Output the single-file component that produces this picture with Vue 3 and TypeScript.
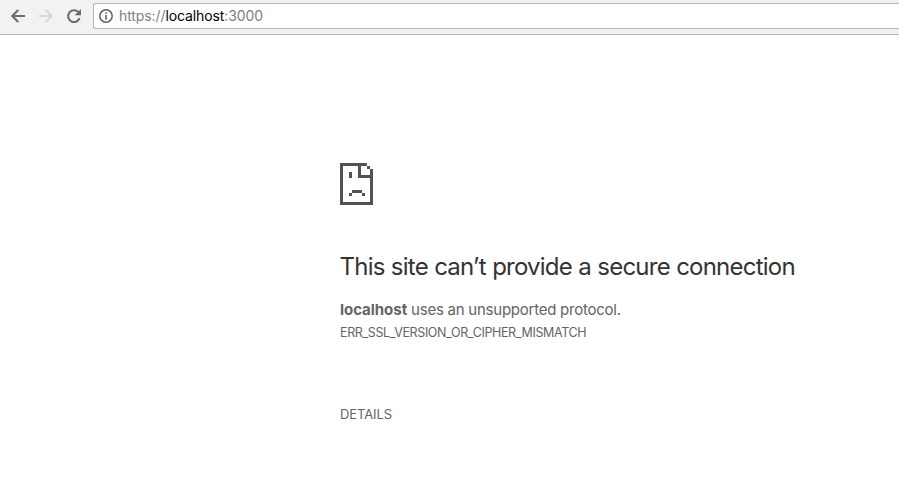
<script setup lang="ts">
const scheme = 'https://'
const host = 'localhost'
const port = ':3000'
const errorCode = 'ERR_SSL_VERSION_OR_CIPHER_MISMATCH'
</script>

<template>
  <div class="browser">
    <header class="toolbar">
      <nav class="nav">
        <svg class="icon" viewBox="0 0 16 16"><path d="M15 8H2.4M8.2 2.1 2.3 8l5.9 5.9" /></svg>
        <svg class="icon disabled" viewBox="0 0 16 16"><path d="M1 8h12.6M7.8 2.1 13.7 8l-5.9 5.9" /></svg>
        <svg class="icon" viewBox="0 0 16 16">
          <path d="M13.6 10.2A5.9 5.9 0 1 1 12.2 3.9L13.2 5" />
          <path class="solid" d="M15 1v6.3H8.7z" />
        </svg>
      </nav>
      <div class="address">
        <svg class="info" viewBox="0 0 14 14">
          <circle cx="7" cy="7" r="6.2" />
          <path d="M6.2 3.2h1.6v1.6H6.2zM6.2 6h1.6v4.8H6.2z" />
        </svg>
        <span class="url">{{ scheme }}<b>{{ host }}</b>{{ port }}</span>
      </div>
    </header>
    <main class="page">
      <svg class="sad" viewBox="0 0 33 42" shape-rendering="crispEdges">
        <path d="M0 0h27v3H21v9h9V6h3v36H0zM3 3v36h27V15H18V3zM27 3h3v3h-3zM9 9h3v6H9zM12 27h10v3H12zM9 30h3v3H9zM22 30h3v3h-3z" fill-rule="evenodd" />
      </svg>
      <h1>This site can’t provide a secure connection</h1>
      <p class="message"><strong>{{ host }}</strong> uses an unsupported protocol.</p>
      <p class="code">{{ errorCode }}</p>
      <button class="details" type="button">DETAILS</button>
    </main>
  </div>
</template>

<style>
body {
  background: #fff;
}
</style>

<style scoped>
.browser {
  height: 485px;
  overflow: hidden;
  font-family: Inter, "Liberation Sans", sans-serif;
}
.toolbar {
  display: flex;
  box-sizing: border-box;
  height: 35px;
  padding-top: 3px;
  background: #f2f2f2;
  border-bottom: 1px solid #b4b4b4;
}
.nav {
  display: flex;
  gap: 12px;
  width: 83px;
  padding: 5px 0 0 10px;
}
.icon {
  flex: none;
  width: 16px;
  height: 16px;
  fill: none;
  stroke: #6b6c6f;
  stroke-width: 2.1;
}
.icon.disabled {
  stroke: #d6d7d8;
}
.icon .solid {
  fill: #6b6c6f;
  stroke: none;
}
.address {
  display: flex;
  flex: 1;
  box-sizing: border-box;
  height: 26px;
  padding: 5px 0 0 5px;
  background: #fff;
  border: 1px solid #b4b4b4;
  border-right: 0;
  border-radius: 3px 0 0 3px;
}
.info {
  flex: none;
  width: 14px;
  height: 14px;
  fill: #5f6065;
}
.info circle {
  fill: none;
  stroke: #5f6065;
  stroke-width: 1.5;
}
.url {
  margin-left: 6px;
  color: #808080;
  font-size: 14px;
  line-height: 14px;
  letter-spacing: -0.1px;
}
.url b {
  color: #000;
  font-weight: 400;
}
.page {
  padding: 128px 0 0 340px;
  color: #646464;
  white-space: nowrap;
}
.sad {
  display: block;
  width: 33px;
  height: 42px;
  fill: #525252;
}
h1 {
  margin: 46px 0 0 -0.5px;
  color: #333;
  font-size: 24px;
  font-weight: 400;
  line-height: 32px;
  letter-spacing: -0.77px;
  word-spacing: 0.3px;
}
.message {
  margin: 17px 0 0;
  font-size: 15px;
  line-height: 20px;
  letter-spacing: -0.24px;
}
.message strong {
  font-weight: 700;
  letter-spacing: -0.04px;
}
.code {
  margin: 5px 0 0;
  font-size: 12.5px;
  line-height: 16px;
  letter-spacing: -0.37px;
}
.details {
  display: block;
  margin: 65px 0 0;
  padding: 0;
  border: 0;
  background: none;
  color: #646464;
  font: inherit;
  font-size: 13px;
  line-height: 16px;
  letter-spacing: -0.1px;
}
</style>
